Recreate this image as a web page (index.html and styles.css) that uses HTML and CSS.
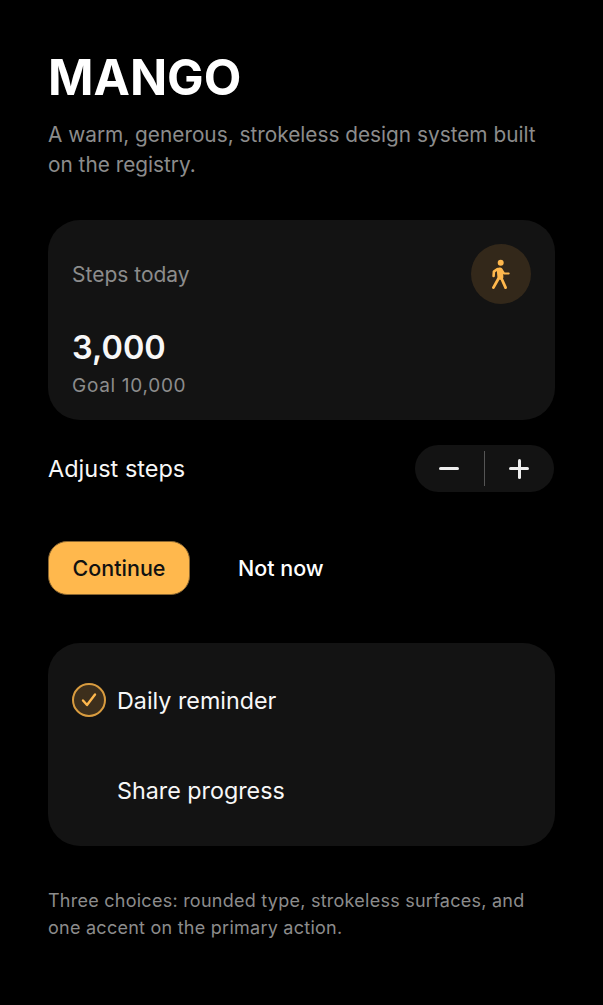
FILE: index.html
```html
<!DOCTYPE html>
<html lang="en">
<head>
    <meta charset="UTF-8">
    <meta name="viewport" content="width=device-width, initial-scale=1.0">
    <title>Mango</title>
    <link rel="stylesheet" href="styles.css">
</head>
<body>
    <div class="container">
        <h1 class="title">MANGO</h1>
        <p class="subtitle">A warm, generous, strokeless design system built on the registry.</p>

        <div class="card steps-card">
            <div class="steps-head">
                <span class="steps-label">Steps today</span>
                <span class="walk-badge">
                    <svg width="20" height="32" viewBox="0 0 20 32" fill="none" stroke="#ffb84d" stroke-linecap="round" stroke-linejoin="round">
                        <circle cx="9.7" cy="4.7" r="3" fill="#ffb84d" stroke="none"/>
                        <path d="M8.8 12.4 L9.4 18.8" stroke-width="6"/>
                        <path d="M6.5 11 L2.9 13.6 L2.6 18" stroke-width="2.6"/>
                        <path d="M11 12.5 L13 15.3 L17.6 15.5" stroke-width="2.2"/>
                        <path d="M7.5 20.5 L2.4 29.6" stroke-width="2.8"/>
                        <path d="M10.5 20.5 L14.6 29.6" stroke-width="2.8"/>
                    </svg>
                </span>
            </div>
            <div class="steps-value">3,000</div>
            <div class="steps-goal">Goal 10,000</div>
        </div>

        <div class="adjust-row">
            <span class="adjust-label">Adjust steps</span>
            <div class="stepper">
                <button class="stepper-btn" aria-label="Decrease"><span class="minus"></span></button>
                <span class="stepper-divider"></span>
                <button class="stepper-btn" aria-label="Increase"><span class="plus"></span></button>
            </div>
        </div>

        <div class="button-container">
            <button class="btn-primary">Continue</button>
            <button class="btn-plain">Not now</button>
        </div>

        <div class="card choices-card">
            <div class="choice">
                <span class="check">
                    <svg width="16" height="16" viewBox="0 0 16 16" fill="none" stroke="#ffb84d" stroke-width="2.4" stroke-linecap="round" stroke-linejoin="round">
                        <path d="M2 8.5 L6 13 L14 2.5"/>
                    </svg>
                </span>
                <span class="choice-text">Daily reminder</span>
            </div>
            <div class="choice">
                <span class="check-empty"></span>
                <span class="choice-text">Share progress</span>
            </div>
        </div>

        <p class="footnote">Three choices: rounded type, strokeless surfaces, and one accent on the primary action.</p>
    </div>
</body>
</html>
```
FILE: styles.css
```css
html, body {
    margin: 0;
    background-color: #000;
}
body {
    font-family: Inter, "Liberation Sans", sans-serif;
    color: #f7f7f7;
}
.container {
    box-sizing: border-box;
    width: 603px;
    height: 1005px;
    padding: 48px 48px 0;
    overflow: hidden;
}
.title {
    margin: 0;
    font-size: 48.8px;
    line-height: 60px;
    font-weight: 700;
    color: #fff;
}
.subtitle {
    margin: 12px 0 0;
    font-size: 20.8px;
    line-height: 30px;
    color: #8c8c8c;
}
.card {
    background-color: #131313;
    border-radius: 32px;
    box-sizing: border-box;
}
.steps-card {
    margin-top: 40px;
    height: 200px;
    padding: 24px;
}
.steps-head {
    display: flex;
    justify-content: space-between;
    align-items: center;
}
.steps-label {
    font-size: 21px;
    color: #8c8c8c;
}
.walk-badge {
    display: flex;
    align-items: center;
    justify-content: center;
    width: 60px;
    height: 60px;
    border-radius: 50%;
    background-color: #33281a;
}
.steps-value {
    margin-top: 24px;
    font-size: 32.5px;
    line-height: 40px;
    font-weight: 600;
}
.steps-goal {
    margin-top: 6px;
    font-size: 19px;
    line-height: 24px;
    letter-spacing: 0.7px;
    color: #8c8c8c;
}
.adjust-row {
    display: flex;
    justify-content: space-between;
    align-items: center;
    margin-top: 25px;
}
.adjust-label {
    font-size: 23.5px;
}
.stepper {
    display: flex;
    align-items: center;
    width: 139px;
    height: 47px;
    margin-right: 1px;
    border-radius: 24px;
    background-color: #131313;
}
.stepper-btn {
    flex: 1;
    height: 100%;
    padding: 0;
    border: none;
    background: none;
    display: flex;
    align-items: center;
    justify-content: center;
}
.minus, .plus {
    display: block;
    position: relative;
    width: 20px;
    height: 3px;
    border-radius: 2px;
    background-color: #eee;
}
.minus {
    margin-right: 2px;
}
.plus {
    margin-right: 1px;
}
.plus::after {
    content: "";
    position: absolute;
    left: 8.5px;
    top: -8.5px;
    width: 3px;
    height: 20px;
    border-radius: 2px;
    background-color: #eee;
}
.stepper-divider {
    width: 1px;
    height: 35px;
    background-color: #555;
}
.button-container {
    display: flex;
    align-items: center;
    margin-top: 49px;
}
.btn-primary {
    box-sizing: border-box;
    width: 142px;
    height: 54px;
    padding: 0;
    border: 1px solid #8a6630;
    border-radius: 19px;
    background-color: #ffb84d;
    color: #111;
    font-family: inherit;
    font-size: 21.5px;
    font-weight: 500;
}
.btn-plain {
    margin-left: 24px;
    padding: 0 24px;
    height: 54px;
    border: none;
    background: none;
    color: #fff;
    font-family: inherit;
    font-size: 21.5px;
    font-weight: 500;
}
.choices-card {
    margin-top: 48px;
    height: 203px;
    padding: 12px 24px;
}
.choice {
    display: flex;
    align-items: center;
    gap: 11px;
    height: 90px;
}
.check, .check-empty {
    box-sizing: border-box;
    width: 34px;
    height: 34px;
    flex-shrink: 0;
}
.check {
    display: flex;
    align-items: center;
    justify-content: center;
    border: 2px solid #d99c3f;
    border-radius: 50%;
    background-color: #3d2f1c;
}
.choice-text {
    font-size: 23.3px;
}
.footnote {
    margin: 41px 0 0;
    font-size: 18px;
    line-height: 27px;
    letter-spacing: 0.25px;
    color: #8c8c8c;
}
```
